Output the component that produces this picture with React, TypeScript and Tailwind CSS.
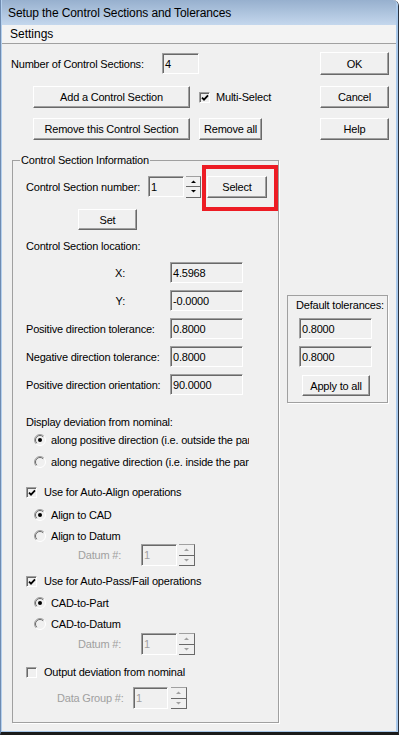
import React from "react";

const FONT = "font-['Liberation_Sans',Arial,sans-serif]";

function Btn({ className, children }: { className: string; children: React.ReactNode }) {
  return (
    <div
      className={`flex items-center justify-center border border-t-white border-l-white border-r-[#696969] border-b-[#696969] bg-[#f0f0f0] shadow-[inset_-1px_-1px_0_#a0a0a0] text-black ${className}`}
    >
      {children}
    </div>
  );
}

function Field({ className, value, disabled }: { className: string; value: string; disabled?: boolean }) {
  return (
    <div
      className={`flex items-center border border-t-[#a0a0a0] border-l-[#a0a0a0] border-r-white border-b-white pl-[2px] shadow-[inset_1px_1px_0_#696969] ${
        disabled ? "text-[#a0a0a0]" : "text-black"
      } ${className}`}
    >
      {value}
    </div>
  );
}

function Arrow({ up, disabled }: { up?: boolean; disabled?: boolean }) {
  return (
    <svg width="5" height="3" viewBox="0 0 5 3">
      <polygon
        points={up ? "0,3 2.5,0.5 5,3" : "0,0 2.5,2.5 5,0"}
        fill={disabled ? "#a0a0a0" : "#000"}
      />
    </svg>
  );
}

function Spin({ className, disabled }: { className: string; disabled?: boolean }) {
  return (
    <div className={`flex flex-col ${className}`}>
      <div className="flex flex-1 items-center justify-center border-t border-t-[#a0a0a0] border-r border-r-[#696969] border-b border-b-[#696969]">
        <Arrow up disabled={disabled} />
      </div>
      <div className="flex flex-1 items-center justify-center border-r border-r-[#696969] border-b border-b-[#696969]">
        <Arrow disabled={disabled} />
      </div>
    </div>
  );
}

function Check({ checked }: { checked?: boolean }) {
  return (
    <div className="flex h-[11px] w-[11px] shrink-0 items-center justify-center border border-t-[#a0a0a0] border-l-[#a0a0a0] border-r-white border-b-white shadow-[inset_1px_1px_0_#696969]">
      {checked && (
        <svg width="8" height="8" viewBox="0 0 8 8" className="ml-[1px] mt-[1px]">
          <path d="M1 3.6 L3 5.6 L7 1.4" stroke="#000" strokeWidth="1.8" fill="none" />
        </svg>
      )}
    </div>
  );
}

function Radio({ checked }: { checked?: boolean }) {
  return (
    <svg width="12" height="12" viewBox="0 0 12 12" className="shrink-0">
      <path d="M2.1 9.9 A5.5 5.5 0 0 1 9.9 2.1" stroke="#a0a0a0" fill="none" />
      <path d="M9.9 2.1 A5.5 5.5 0 0 1 2.1 9.9" stroke="#ffffff" fill="none" />
      <path d="M2.8 9.2 A4.5 4.5 0 0 1 9.2 2.8" stroke="#696969" fill="none" />
      {checked && <circle cx="6" cy="6" r="2" fill="#000" />}
    </svg>
  );
}

function FieldRow({ label, value, right }: { label: string; value: string; right?: boolean }) {
  return (
    <div className="mt-[7px] flex h-[21px] items-center pl-[13px]">
      <span className={`w-[144px] ${right ? "pr-[45px] text-right" : ""}`}>{label}</span>
      <Field className="h-[21px] w-[73px]" value={value} />
    </div>
  );
}

function RadioRow({ label, checked, mt, clip }: { label: string; checked?: boolean; mt: string; clip?: boolean }) {
  return (
    <div className={`flex h-[14px] items-center pl-[21px] ${mt}`}>
      <Radio checked={checked} />
      <span className={`ml-[5px] whitespace-nowrap ${clip ? "w-[198px] overflow-hidden" : ""}`}>{label}</span>
    </div>
  );
}

function CheckRow({ label, checked, mt }: { label: string; checked?: boolean; mt: string }) {
  return (
    <div className={`flex h-[14px] items-center pl-[13px] ${mt}`}>
      <Check checked={checked} />
      <span className="ml-[7px] whitespace-nowrap">{label}</span>
    </div>
  );
}

export default function App() {
  return (
    <div
      className={`flex h-[735px] w-[399px] flex-col overflow-hidden rounded-tr-[6px] border-l border-r border-b-[3px] border-l-[#6f8bb0] border-r-[#2a3340] border-b-[#1b1b1b] text-[11px] leading-[14px] tracking-[-0.2px] text-black ${FONT}`}
    >
      <div className="flex flex-1 flex-col border-l border-r-2 border-b border-l-[#b4d0ee] border-r-[#a9c8ea] border-b-[#a9c8ea]">
        {/* title bar */}
        <div className="flex h-[25px] items-center bg-linear-to-b from-[#97b0ce] to-[#c4d7ed] pl-[6px] text-[12px] tracking-[-0.1px]">
          Setup the Control Sections and Tolerances
        </div>
        {/* menu */}
        <div className="flex h-[19px] items-center border-b border-b-[#a0a0a0] bg-[#f3f3f3] pl-[8px] text-[12px] tracking-normal">
          Settings
        </div>

        <div className="flex-1 bg-[#f0f0f0] pt-[8px]">
          {/* top controls */}
          <div className="flex">
            <div className="flex w-[318px] flex-col">
              <div className="flex h-[23px] items-center pl-[9px]">
                <span className="w-[151px]">Number of Control Sections:</span>
                <Field className="h-[21px] w-[37px]" value="4" />
              </div>
              <div className="mt-[11px] flex h-[22px] items-center pl-[31px]">
                <Btn className="h-[22px] w-[157px]">Add a Control Section</Btn>
                <div className="ml-[9px]">
                  <Check checked />
                </div>
                <span className="ml-[6px]">Multi-Select</span>
              </div>
              <div className="mt-[10px] flex h-[22px] items-center pl-[31px]">
                <Btn className="h-[22px] w-[157px]">Remove this Control Section</Btn>
                <Btn className="ml-[9px] h-[22px] w-[63px]">Remove all</Btn>
              </div>
            </div>
            <div className="flex flex-col">
              <Btn className="h-[23px] w-[69px]">OK</Btn>
              <Btn className="mt-[11px] h-[22px] w-[69px]">Cancel</Btn>
              <Btn className="mt-[10px] h-[22px] w-[69px]">Help</Btn>
            </div>
          </div>

          {/* lower area */}
          <div className="mt-[20px] flex">
            <div className="relative ml-[10px] flex h-[563px] w-[267px] flex-col border border-[#a0a0a0] shadow-[1px_1px_0_#ffffff]">
              <span className="absolute -top-[8px] left-[7px] bg-[#f0f0f0] px-[1px]">Control Section Information</span>

              <div className="mt-[14px] flex h-[23px] items-center pl-[13px]">
                <span className="w-[122px]">Control Section number:</span>
                <Field className="h-[21px] w-[36px]" value="1" />
                <Spin className="ml-[2px] h-[22px] w-[15px]" />
                <div className="relative ml-[6px]">
                  <Btn className="h-[22px] w-[60px]">Select</Btn>
                  <div className="absolute -top-[11px] -left-[5px] h-[46px] w-[76px] border-4 border-[#ed1c24]" />
                </div>
              </div>

              <Btn className="mt-[11px] ml-[65px] h-[21px] w-[59px]">Set</Btn>

              <div className="mt-[9px] h-[14px] pl-[13px]">Control Section location:</div>
              <div className="mt-[2px]" />
              <FieldRow label="X:" value="4.5968" right />
              <FieldRow label="Y:" value="-0.0000" right />
              <FieldRow label="Positive direction tolerance:" value="0.8000" />
              <FieldRow label="Negative direction tolerance:" value="0.8000" />
              <FieldRow label="Positive direction orientation:" value="90.0000" />

              <div className="mt-[20px] h-[14px] pl-[13px]">Display deviation from nominal:</div>
              <RadioRow mt="mt-[4px]" checked clip label="along positive direction (i.e. outside the part)" />
              <RadioRow mt="mt-[8px]" clip label="along negative direction (i.e. inside the part)" />

              <CheckRow mt="mt-[16px]" checked label="Use for Auto-Align operations" />
              <RadioRow mt="mt-[9px]" checked label="Align to CAD" />
              <RadioRow mt="mt-[7px]" label="Align to Datum" />
              <div className="mt-[1px] flex h-[22px] items-center pl-[65px]">
                <span className="w-[63px] text-[#a0a0a0]">Datum #:</span>
                <Field className="h-[22px] w-[36px]" value="1" disabled />
                <Spin className="ml-[2px] h-[22px] w-[16px]" disabled />
              </div>

              <CheckRow mt="mt-[8px]" checked label="Use for Auto-Pass/Fail operations" />
              <RadioRow mt="mt-[8px]" checked label="CAD-to-Part" />
              <RadioRow mt="mt-[7px]" label="CAD-to-Datum" />
              <div className="mt-[2px] flex h-[22px] items-center pl-[65px]">
                <span className="w-[63px] text-[#a0a0a0]">Datum #:</span>
                <Field className="h-[22px] w-[36px]" value="1" disabled />
                <Spin className="ml-[2px] h-[22px] w-[16px]" disabled />
              </div>

              <CheckRow mt="mt-[10px]" label="Output deviation from nominal" />
              <div className="mt-[8px] flex h-[22px] items-center pl-[44px]">
                <span className="w-[76px] text-[#a0a0a0]">Data Group #:</span>
                <Field className="h-[22px] w-[35px]" value="1" disabled />
                <Spin className="ml-[3px] h-[22px] w-[16px]" disabled />
              </div>
            </div>

            <div className="ml-[8px] mt-[135px] flex h-[108px] w-[101px] flex-col border border-[#a0a0a0] shadow-[1px_1px_0_#ffffff]">
              <div className="mt-[2px] h-[14px] pl-[8px]">Default tolerances:</div>
              <Field className="mt-[6px] ml-[11px] h-[21px] w-[73px]" value="0.8000" />
              <Field className="mt-[7px] ml-[11px] h-[21px] w-[73px]" value="0.8000" />
              <Btn className="mt-[8px] ml-[14px] h-[21px] w-[68px]">Apply to all</Btn>
            </div>
          </div>
        </div>
      </div>
    </div>
  );
}
